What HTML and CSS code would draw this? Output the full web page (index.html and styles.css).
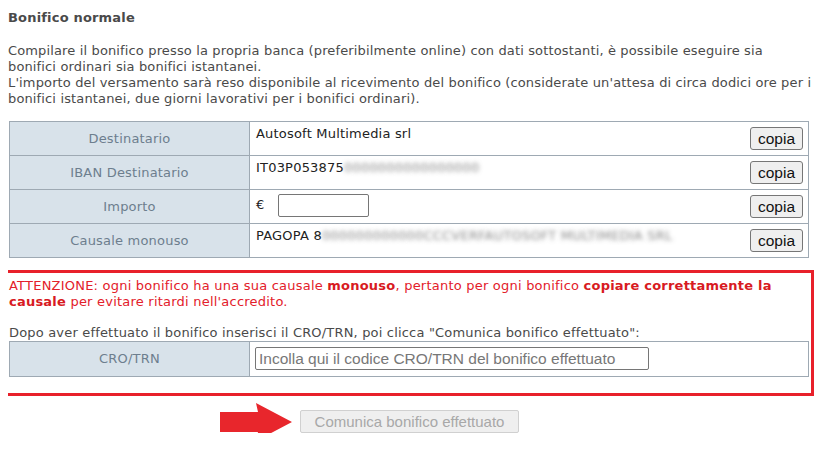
FILE: index.html
```html
<!DOCTYPE html>
<html lang="it">
<head>
    <meta charset="UTF-8">
    <title>Bonifico normale</title>
    <link rel="stylesheet" href="styles.css">
</head>
<body>
    <h3 class="title">Bonifico normale</h3>
    <p class="intro">
        Compilare il bonifico presso la propria banca (preferibilmente online) con dati sottostanti, è possibile eseguire sia<br>
        bonifici ordinari sia bonifici istantanei.<br>
        L'importo del versamento sarà reso disponibile al ricevimento del bonifico (considerate un'attesa di circa dodici ore per i bonifici istantanei, due giorni lavorativi per i bonifici ordinari).
    </p>

    <table class="data">
        <tr>
            <td class="label">Destinatario</td>
            <td class="value"><button class="copy">copia</button>Autosoft Multimedia srl</td>
        </tr>
        <tr>
            <td class="label">IBAN Destinatario</td>
            <td class="value"><button class="copy">copia</button>IT03P053875<span class="blur">0000000000000000</span></td>
        </tr>
        <tr>
            <td class="label">Importo</td>
            <td class="value"><button class="copy">copia</button>€ <input type="text" class="amount"></td>
        </tr>
        <tr>
            <td class="label">Causale monouso</td>
            <td class="value"><button class="copy">copia</button>PAGOPA 8<span class="blur">000000000000CCCVERFAUTOSOFT MULTIMEDIA SRL</span></td>
        </tr>
    </table>

    <div class="warning">
        <p class="alert">ATTENZIONE: ogni bonifico ha una sua causale <b>monouso</b>, pertanto per ogni bonifico <b>copiare correttamente la causale</b> per evitare ritardi nell'accredito.</p>
        <p class="hint">Dopo aver effettuato il bonifico inserisci il CRO/TRN, poi clicca "Comunica bonifico effettuato":</p>
        <table class="data">
            <tr>
                <td class="label">CRO/TRN</td>
                <td class="value"><input type="text" class="cro" placeholder="Incolla qui il codice CRO/TRN del bonifico effettuato"></td>
            </tr>
        </table>
    </div>

    <div class="submit">
        <div class="submit-inner">
            <svg class="arrow" width="74" height="38" viewBox="0 0 74 38">
                <path d="M1 9 L39 9 L37 0 L73 19 L37 38 L39 29 L1 29 Z" fill="#e8262c"/>
            </svg>
            <button class="send" disabled>Comunica bonifico effettuato</button>
        </div>
    </div>
</body>
</html>
```

FILE: styles.css
```css
body {
    font-family: 'DejaVu Sans', Verdana, sans-serif;
    font-size: 13px;
    letter-spacing: 0.18px;
    line-height: 16px;
    color: #4a4a4a;
    background-color: #fff;
    margin: 8px;
}

.title {
    font-size: 13px;
    font-weight: bold;
    margin: 2px 0 0;
    line-height: 16px;
}

.intro {
    margin: 17px -1px 0 0;
    letter-spacing: 0.14px;
}

.data {
    width: 800px;
    margin: 14px 0 0 1px;
    border-collapse: collapse;
    letter-spacing: 0;
}

.data td {
    border: 1px solid #9ea9b3;
}

.data .label {
    width: 231px;
    background-color: #d8e2ea;
    color: #6d7e8e;
    text-align: center;
    vertical-align: middle;
    padding: 8px 4px;
    letter-spacing: 0.2px;
}

.data .value {
    color: #222;
    vertical-align: top;
    padding: 4px 5px 5px 6px;
    letter-spacing: 0.2px;
}

.blur {
    color: transparent;
    text-shadow: 0 0 4px rgba(90, 90, 90, 0.7);
}

.copy {
    float: right;
    font-family: 'Liberation Sans', Arial, sans-serif;
    font-size: 15.5px;
    letter-spacing: 0;
    color: #111;
    background-color: #efefef;
    border: 1px solid #767676;
    border-radius: 3px;
    padding: 1px 6px;
    height: 23px;
    width: 53px;
    margin: 1px 0 0;
}

.amount {
    box-sizing: border-box;
    width: 91px;
    height: 23px;
    margin: 0 0 0 9px;
    border: 1px solid #767676;
    border-radius: 2px;
    padding: 1px 2px;
    vertical-align: middle;
}

.warning {
    box-sizing: border-box;
    width: 810px;
    margin: 12px 0 0 -4px;
    border: 3px solid #e8202a;
    padding: 5px 2px 16px 2px;
}

.warning .data {
    margin: 0;
}

.alert {
    color: #e3202a;
    margin: 0;
    letter-spacing: 0.22px;
}

.alert b {
    color: #d81a22;
}

.hint {
    margin: 15px 0 0;
}

.warning .value {
    padding: 5px 5px 6px 5px;
}

.cro {
    box-sizing: border-box;
    font-family: 'Liberation Sans', Arial, sans-serif;
    font-size: 15.5px;
    letter-spacing: 0;
    width: 394px;
    height: 23px;
    padding: 1px 3px;
    border: 1px solid #767676;
    border-radius: 2px;
}

.cro::placeholder {
    color: #777;
}

.submit {
    display: flex;
    justify-content: center;
    margin-top: 14px;
}

.submit-inner {
    position: relative;
    margin-left: -3px;
}

.arrow {
    position: absolute;
    left: -81px;
    top: -7px;
}

.send {
    font-family: 'Liberation Sans', Arial, sans-serif;
    font-size: 15px;
    color: #a8a8a8;
    background-color: #efefef;
    border: 1px solid #d0d0d0;
    border-radius: 2px;
    padding: 2px 8px;
    height: 23px;
    width: 219px;
}
```
